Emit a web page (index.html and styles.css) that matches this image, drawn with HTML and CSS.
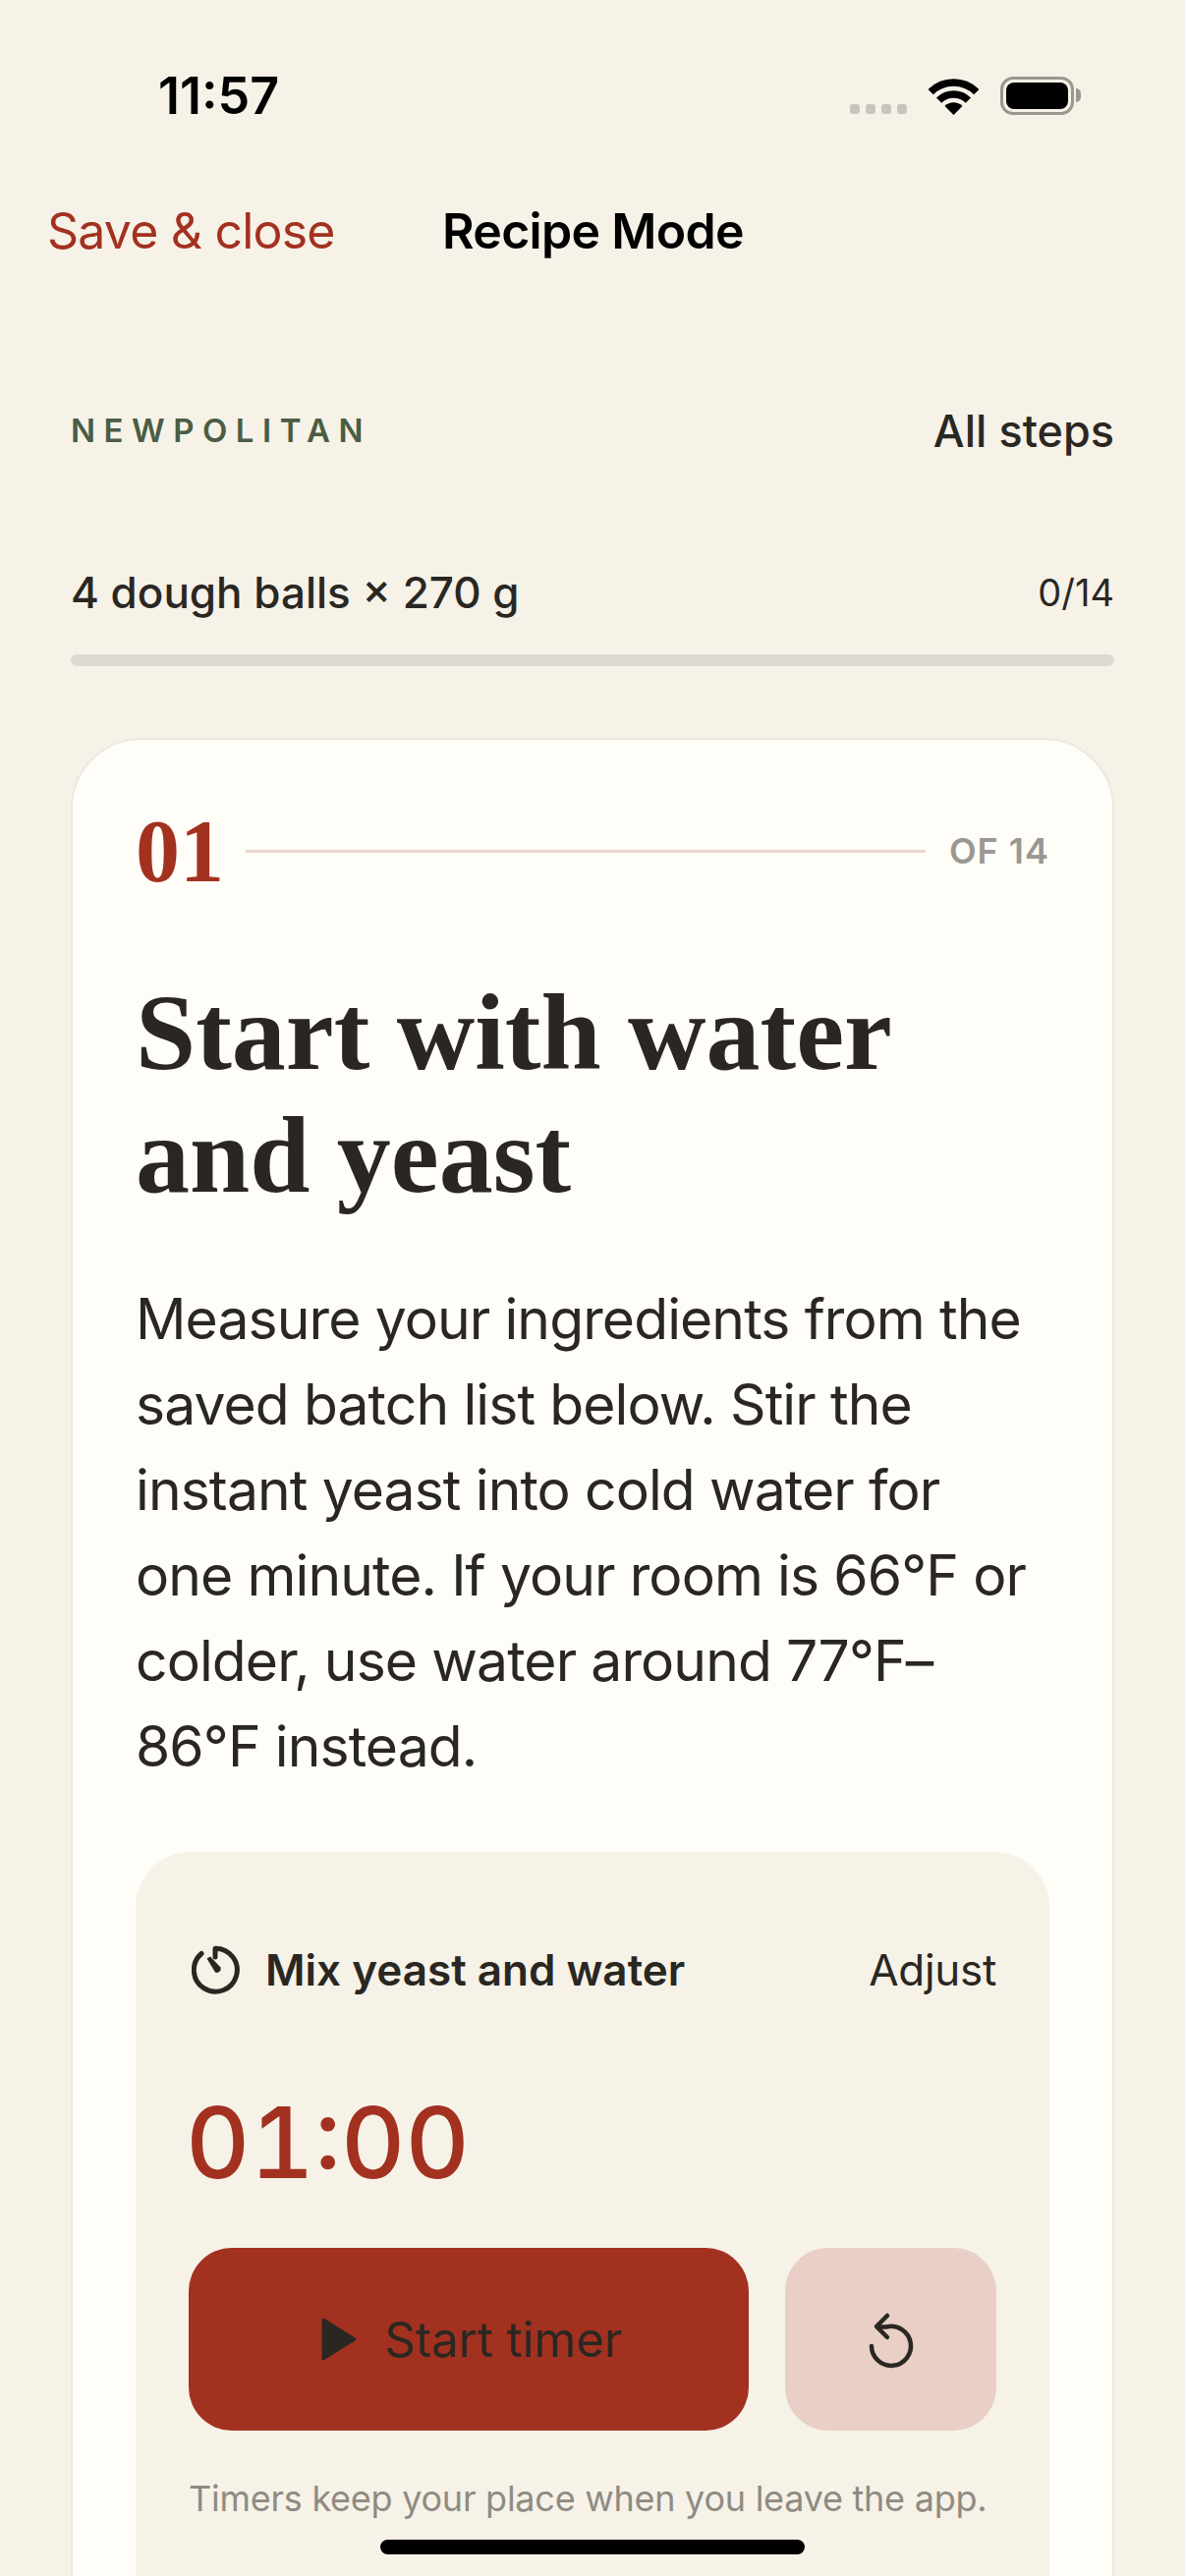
FILE: index.html
```html
<!DOCTYPE html>
<html>
    <head>
        <title>Recipe Mode</title>
        <meta charset="utf-8"/>
        <link rel="stylesheet" href="styles.css">
    </head>
    <body class="body">
        <div class="status">
            <span class="clock">11:57</span>
            <div class="status_icons">
                <div class="dots"><i></i><i></i><i></i><i></i></div>
                <svg class="wifi" width="51" height="37" viewBox="0 0 51 37">
                    <path d="M2.2 13.7A33 33 0 0 1 48.8 13.7" fill="none" stroke="#000" stroke-width="7.5"/>
                    <path d="M10.6 22.1A21 21 0 0 1 40.4 22.1" fill="none" stroke="#000" stroke-width="7.5"/>
                    <path d="M25.5 37L16.5 28A12.7 12.7 0 0 1 34.5 28Z" fill="#000"/>
                </svg>
                <div class="battery"><i></i></div>
            </div>
        </div>
        <header class="header">
            <a class="save">Save &amp; close</a>
            <h1 class="page_title">Recipe Mode</h1>
        </header>
        <section class="intro">
            <div class="name_row">
                <span class="brand">NEWPOLITAN</span>
                <a class="all_steps">All steps</a>
            </div>
            <div class="batch_row">
                <span class="batch">4 dough balls × 270 g</span>
                <span class="count">0/14</span>
            </div>
            <div class="progress"></div>
        </section>
        <main class="card">
            <div class="step_row">
                <span class="step_no">01</span>
                <span class="step_line"></span>
                <span class="step_of">OF 14</span>
            </div>
            <h2 class="step_title">Start with water<br>and yeast</h2>
            <p class="step_text">Measure your ingredients from the saved batch list below. Stir the instant yeast into cold water for one minute. If your room is 66°F or colder, use water around 77°F–86°F instead.</p>
            <div class="timer">
                <div class="timer_head">
                    <svg class="timer_icon" width="52" height="52" viewBox="0 0 52 52">
                        <path d="M10 9.5A22 22 0 1 0 24 4.2V13" fill="none" stroke="#2a2722" stroke-width="5" stroke-linecap="round" stroke-linejoin="round"/>
                        <path d="M15.5 14.5L19 12.5L29.5 23.5A4 4 0 0 1 24 28.5Z" fill="#2a2722"/>
                    </svg>
                    <span class="timer_name">Mix yeast and water</span>
                    <a class="adjust">Adjust</a>
                </div>
                <div class="timer_value">01:00</div>
                <div class="timer_btns">
                    <button class="btn_start">
                        <svg width="36" height="44" viewBox="0 0 36 44"><path d="M2 2L34 22L2 42Z" fill="#2a2722" stroke="#2a2722" stroke-width="3" stroke-linejoin="round"/></svg>
                        <span>Start timer</span>
                    </button>
                    <button class="btn_reset">
                        <svg width="52" height="64" viewBox="0 0 52 64">
                            <path d="M6 39A20 20 0 1 0 21 19.500H14" fill="none" stroke="#2a2722" stroke-width="4.500" stroke-linecap="round"/>
                            <path d="M22 8L11 19L22 30" fill="none" stroke="#2a2722" stroke-width="4.500" stroke-linecap="round" stroke-linejoin="round"/>
                        </svg>
                    </button>
                </div>
                <p class="timer_note">Timers keep your place when you leave the app.</p>
            </div>
        </main>
        <div class="home_bar"></div>
    </body>
</html>
```

FILE: styles.css
```css
.body{
    margin:0;
    width:1206px;
    height:2622px;
    overflow:hidden;
    position:relative;
    background-color:#f6f2e8;
    font-family:"Inter","Liberation Sans",sans-serif;
    color:#2a2722;
}
.status{
    height:170px;
    box-sizing:border-box;
    padding:68px 113px 0 161px;
    display:flex;
    justify-content:space-between;
    align-items:flex-start;
}
.clock{
    font-size:52px;
    font-weight:600;
    line-height:60px;
    color:#000;
}
.status_icons{
    display:flex;
    align-items:flex-end;
    padding-top:10px;
}
.dots{
    display:flex;
    gap:6px;
    margin-right:22px;
    margin-bottom:1px;
}
.dots i{
    width:10px;
    height:10px;
    border-radius:3px;
    background-color:#c9c5bc;
}
.wifi{
    margin-right:22px;
}
.battery{
    width:75px;
    height:39px;
    box-sizing:border-box;
    border:3px solid #9b978e;
    border-radius:13px;
    padding:3px;
    position:relative;
}
.battery i{
    display:block;
    height:100%;
    background-color:#000;
    border-radius:8px;
}
.battery::after{
    content:'';
    position:absolute;
    right:-10px;
    top:9px;
    width:5px;
    height:14px;
    background-color:#9b978e;
    border-radius:0 7px 7px 0;
}
.header{
    display:flex;
    align-items:center;
    height:62px;
    padding-left:48px;
    margin-top:34px;
}
.save{
    font-size:50px;
    letter-spacing:-0.8px;
    color:#a33120;
    width:402px;
}
.page_title{
    margin:0;
    font-size:50px;
    font-weight:600;
    letter-spacing:-0.7px;
    color:#000;
}
.intro{
    padding:0 72px;
}
.name_row{
    display:flex;
    justify-content:space-between;
    align-items:center;
    margin-top:142px;
    height:60px;
}
.brand{
    font-size:33px;
    font-weight:600;
    letter-spacing:8.5px;
    color:#4a5d43;
}
.all_steps{
    font-size:45px;
    font-weight:500;
}
.batch_row{
    display:flex;
    justify-content:space-between;
    align-items:center;
    margin-top:105px;
    height:60px;
}
.batch{
    font-size:44px;
    font-weight:500;
}
.count{
    font-size:38px;
}
.progress{
    height:12px;
    margin-top:33px;
    border-radius:6px;
    background-color:#dedad3;
}
.card{
    margin:73px 72px 0;
    padding:73px 64px 0;
    background-color:#fffdf8;
    border:2px solid #ece9e2;
    border-radius:72px;
}
.step_row{
    display:flex;
    align-items:center;
    height:80px;
}
.step_no{
    font-family:"Liberation Serif",serif;
    font-size:90px;
    font-weight:700;
    color:#a33120;
    width:112px;
}
.step_line{
    flex:1;
    height:3px;
    background-color:#ebd5cd;
}
.step_of{
    margin-left:24px;
    font-size:36px;
    font-weight:600;
    letter-spacing:1px;
    color:#9a9892;
}
.step_title{
    margin:83px 0 0;
    font-family:"Liberation Serif",serif;
    font-size:110px;
    font-weight:700;
    line-height:125px;
}
.step_text{
    margin:60px 0 0;
    font-size:57px;
    letter-spacing:-0.9px;
    line-height:87px;
}
.timer{
    margin:64px 0 0;
    padding:86px 54px 0;
    height:800px;
    box-sizing:border-box;
    background-color:#f6f2e8;
    border-radius:56px;
}
.timer_head{
    display:flex;
    align-items:center;
    height:68px;
}
.timer_icon{
    margin-right:23px;
    margin-left:3px;
}
.timer_name{
    flex:1;
    font-size:44px;
    font-weight:600;
}
.adjust{
    font-size:44px;
    letter-spacing:-0.3px;
}
.timer_value{
    margin-top:81px;
    margin-left:-3px;
    font-size:101px;
    font-weight:500;
    font-feature-settings:"tnum";
    line-height:120px;
    color:#a33120;
}
.timer_btns{
    display:flex;
    gap:37px;
    margin-top:48px;
}
.btn_start,.btn_reset{
    height:186px;
    border:none;
    border-radius:44px;
    padding:0;
    display:flex;
    align-items:center;
    justify-content:center;
    font-family:inherit;
    color:#2a2722;
}
.btn_start{
    flex:1;
    gap:28px;
    padding-left:7px;
    font-size:49px;
    background-color:#a33120;
}
.btn_reset{
    width:215px;
    background-color:#e9cfc5;
}
.timer_note{
    margin:47px 0 0;
    font-size:36px;
    letter-spacing:-0.25px;
    color:#8f8b82;
    white-space:nowrap;
}
.home_bar{
    position:absolute;
    left:387px;
    top:2585px;
    width:432px;
    height:15px;
    border-radius:8px;
    background-color:#000;
}
```
